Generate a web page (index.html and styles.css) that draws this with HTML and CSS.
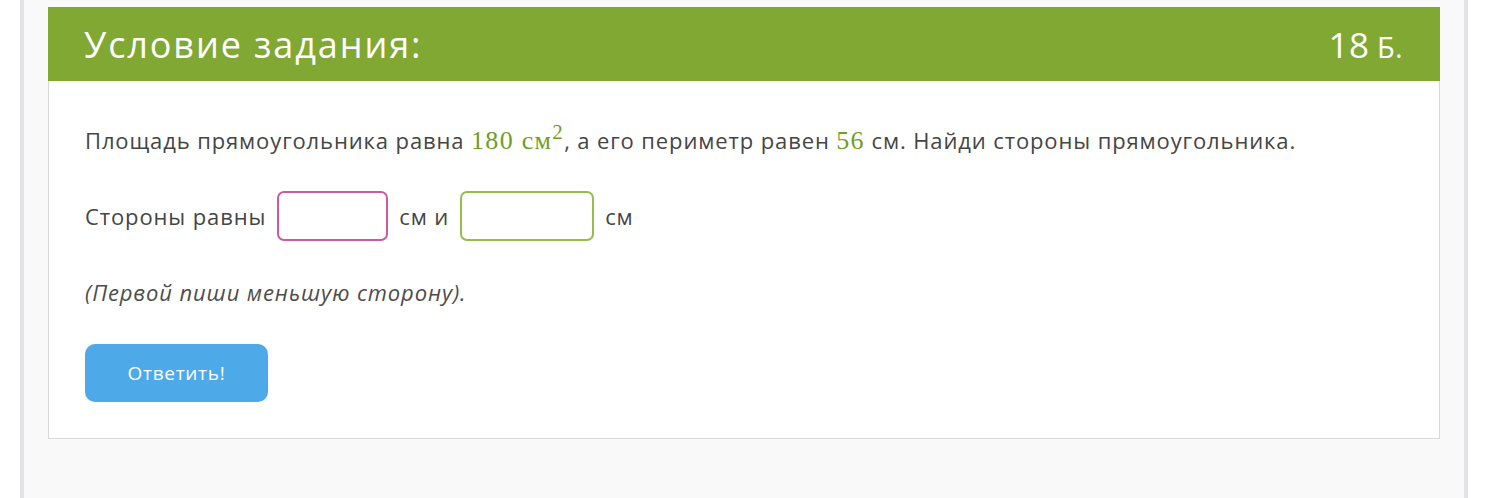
FILE: index.html
```html
<!DOCTYPE html>
<html lang="ru">
<head>
<meta charset="utf-8">
<link rel="stylesheet" href="styles.css">
</head>
<body>
<div class="page">
  <div class="card">
    <div class="card-head">
      <h1 class="title">Условие задания:</h1>
      <span class="points">18<span class="points-unit"> Б.</span></span>
    </div>
    <div class="card-body">
      <p class="line">Площадь прямоугольника равна <span class="math">180 см<sup>2</sup></span>, а его периметр равен <span class="math">56</span> см. Найди стороны прямоугольника.</p>
      <div class="line answer">
        <span>Стороны равны</span>
        <span class="field field-a"></span>
        <span>см и</span>
        <span class="field field-b"></span>
        <span>см</span>
      </div>
      <p class="line note">(Первой пиши меньшую сторону).</p>
      <button class="submit" type="button">Ответить!</button>
    </div>
  </div>
</div>
</body>
</html>
```
FILE: styles.css
```css
html, body {
  margin: 0;
  padding: 0;
  background: #ffffff;
  font-family: "Open Sans", "Noto Sans", sans-serif;
  color: #454545;
}
.page {
  margin: 0 20px;
  height: 498px;
  box-sizing: border-box;
  padding: 7px 24px 0;
  background: #f9f9f9;
  border-left: 4px solid #e3e3e7;
  border-right: 4px solid #e3e3e7;
}
.card {
  background: #ffffff;
  border: 1px solid #d9d9d9;
  border-top: none;
}
.card-head {
  display: flex;
  justify-content: space-between;
  align-items: center;
  height: 74px;
  padding: 0 37px 0 36px;
  margin: 0 -1px;
  background: #80a833;
  color: #ffffff;
}
.title {
  margin: 0;
  font-size: 36px;
  font-weight: 400;
  letter-spacing: 1.9px;
}
.points {
  font-size: 35px;
  letter-spacing: 0.3px;
}
.points-unit {
  font-size: 29px;
}
.card-body {
  padding: 44px 36px 36px;
  display: flex;
  flex-direction: column;
  align-items: flex-start;
}
.line {
  margin: 0;
  font-size: 22px;
  line-height: 30px;
  letter-spacing: 0.88px;
}
.math {
  font-family: "Liberation Serif", "Times New Roman", serif;
  color: #6f9e26;
  font-size: 26px;
  letter-spacing: 1.3px;
}
.math sup {
  font-size: 21px;
  line-height: 0;
  vertical-align: 0.5em;
}
.answer {
  display: flex;
  align-items: center;
  margin-top: 35px;
  height: 50px;
}
.field {
  display: inline-block;
  height: 46px;
  border-radius: 7px;
  background: #fff;
}
.field-a {
  width: 107px;
  border: 2px solid #cb5aa6;
  margin: 0 11px 0 11px;
}
.field-b {
  width: 130px;
  border: 2px solid #95bd4d;
  margin: 0 11px 0 11px;
}
.note {
  margin-top: 36px;
  font-style: italic;
  color: #4d4d4d;
}
.submit {
  margin-top: 37px;
  width: 183px;
  height: 58px;
  border: none;
  border-radius: 10px;
  background: #4ea9e8;
  color: #ffffff;
  font-family: "Open Sans", "Noto Sans", sans-serif;
  font-size: 19px;
  letter-spacing: 0.7px;
  padding: 0;
}
```
